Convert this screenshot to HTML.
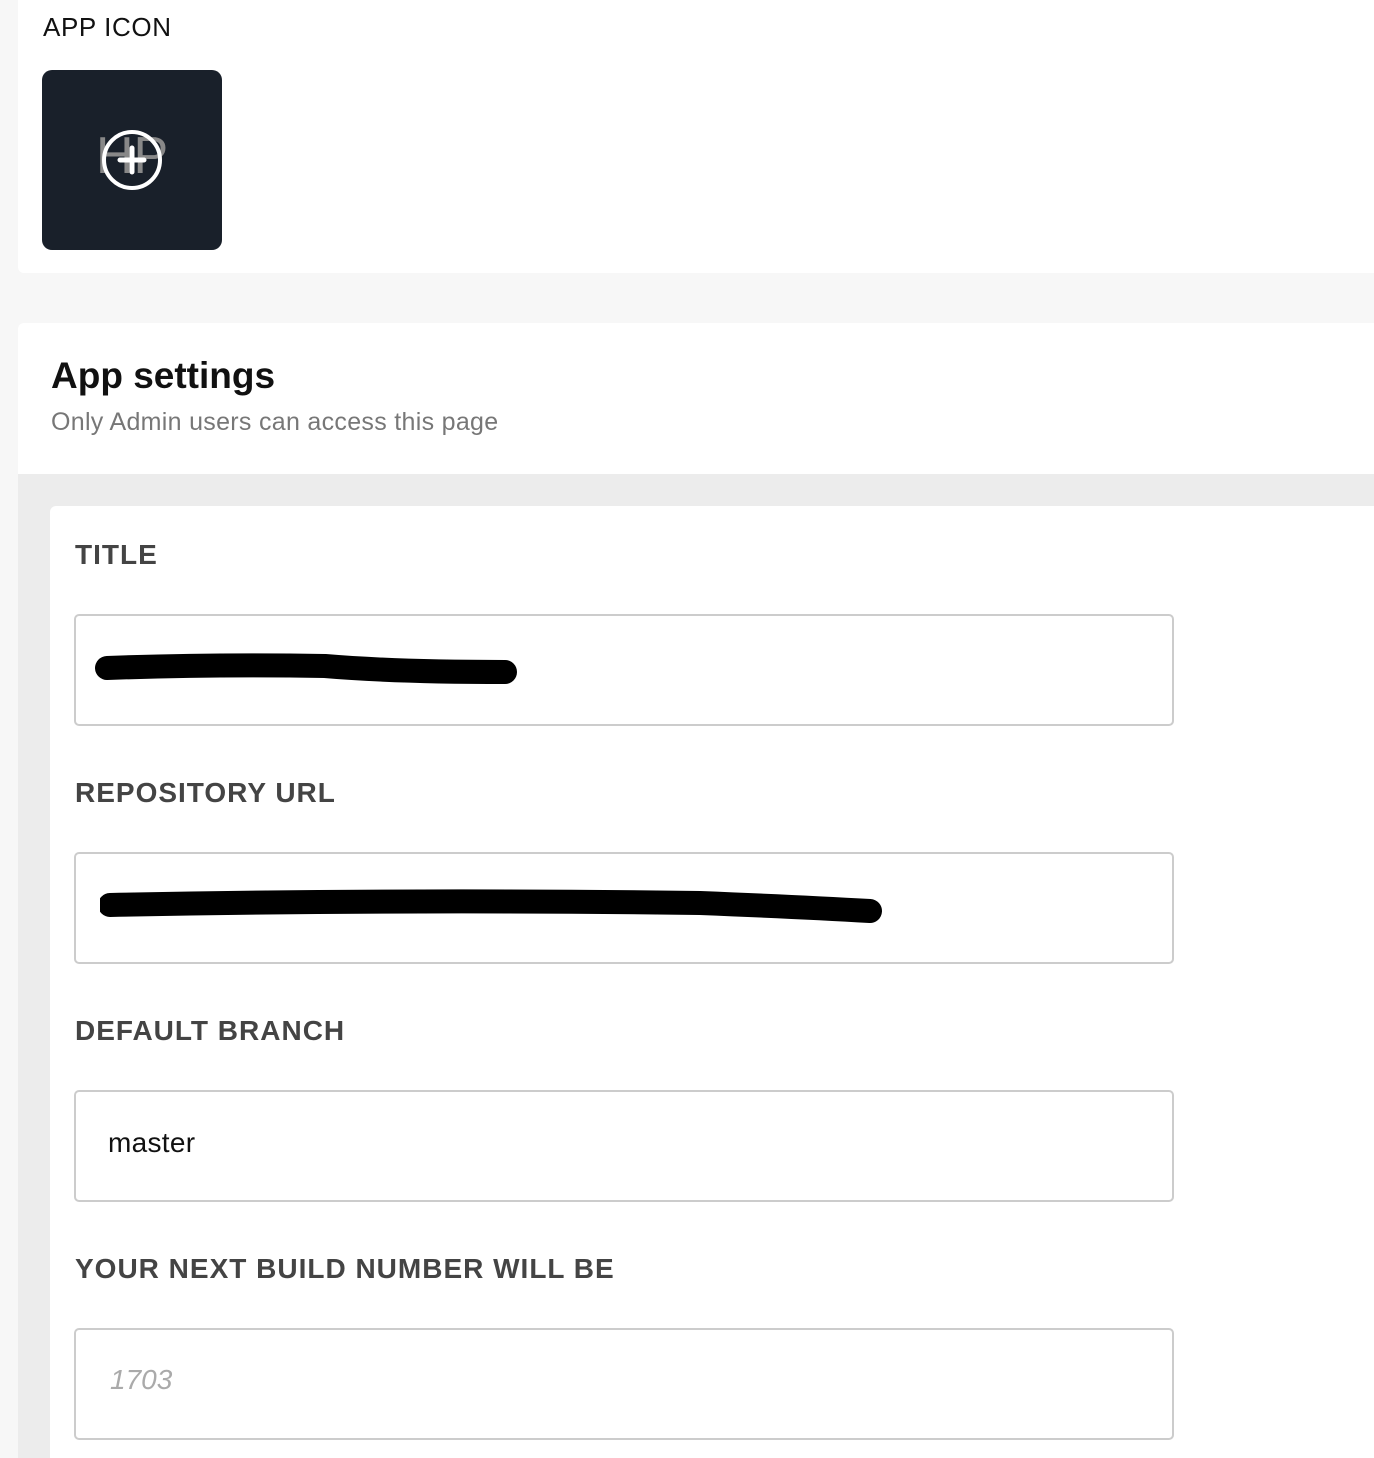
<!DOCTYPE html>
<html><head><style>
body{margin:0;width:1374px;height:1458px;background:#f7f7f7;font-family:"Liberation Sans",sans-serif;position:relative;overflow:hidden}
.a{position:absolute}
.lbl{position:absolute;left:75px;font-weight:bold;font-size:28px;color:#444;letter-spacing:1px}
.inp{position:absolute;left:74px;width:1096px;height:108px;border:2px solid #ccc;border-radius:5px;background:#fff}
</style></head><body>
<div class="a" style="left:18px;top:0;width:1356px;height:273px;background:#fff;border-radius:0 0 0 6px"></div>
<div class="a" style="left:43px;top:12px;font-size:26px;color:#111;letter-spacing:0.6px">APP ICON</div>
<div class="a" style="left:42px;top:70px;width:180px;height:180px;background:#19202a;border-radius:10px"></div>
<div class="a" style="left:96px;top:128px;font-size:52px;color:#888;line-height:56px">HP</div>
<svg class="a" style="left:100px;top:128px" width="64" height="64"><circle cx="32" cy="32" r="28" fill="none" stroke="#fff" stroke-width="4"/><path d="M32 20V44M20 32H44" stroke="#fff" stroke-width="5" stroke-linecap="round"/></svg>
<div class="a" style="left:18px;top:323px;width:1356px;height:151px;background:#fff;border-radius:6px 0 0 0"></div>
<div class="a" style="left:51px;top:355px;font-size:37px;font-weight:bold;color:#111">App settings</div>
<div class="a" style="left:51px;top:408px;font-size:25px;color:#777;letter-spacing:0.3px">Only Admin users can access this page</div>
<div class="a" style="left:18px;top:474px;width:1356px;height:984px;background:#ececec"></div>
<div class="a" style="left:50px;top:506px;width:1324px;height:952px;background:#fff;border-radius:6px 0 0 0"></div>
<div class="lbl" style="top:539px">TITLE</div>
<div class="inp" style="top:614px"></div>
<svg class="a" style="left:95px;top:652px" width="430" height="40"><path d="M12 16 Q120 12 230 14 Q300 20 410 20" stroke="#000" stroke-width="24" stroke-linecap="round" fill="none"/></svg>
<div class="lbl" style="top:777px">REPOSITORY URL</div>
<div class="inp" style="top:852px"></div>
<svg class="a" style="left:100px;top:885px" width="785" height="50"><path d="M10 20 Q300 14 600 18 Q700 22 770 26" stroke="#000" stroke-width="24" stroke-linecap="round" fill="none"/></svg>
<div class="lbl" style="top:1015px">DEFAULT BRANCH</div>
<div class="inp" style="top:1090px"></div>
<div class="a" style="left:108px;top:1127px;font-size:28px;color:#111;letter-spacing:0.3px">master</div>
<div class="lbl" style="top:1253px">YOUR NEXT BUILD NUMBER WILL BE</div>
<div class="inp" style="top:1328px"></div>
<div class="a" style="left:110px;top:1364px;font-size:28px;color:#aaa;font-style:italic">1703</div>
</body></html>
